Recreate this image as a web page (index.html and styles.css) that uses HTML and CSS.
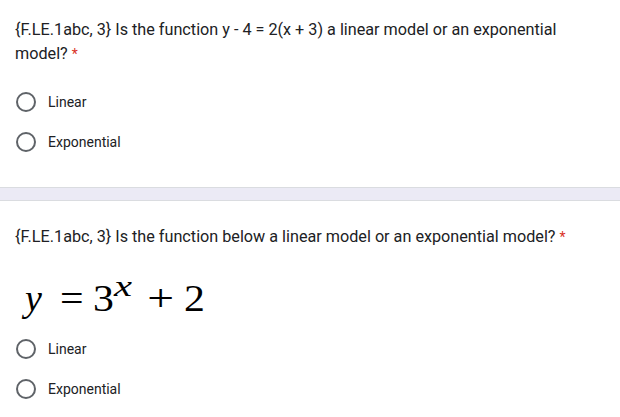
FILE: index.html
```html
<!DOCTYPE html>
<html>
<head>
<meta charset="utf-8">
<link rel="stylesheet" href="styles.css">
</head>
<body>
<section class="card first">
  <div class="question">{F.LE.1abc, 3} Is the function y - 4 = 2(x + 3) a linear model or an exponential model? <span class="req">*</span></div>
  <div class="options">
    <label class="option"><span class="radio"></span><span class="label">Linear</span></label>
    <label class="option"><span class="radio"></span><span class="label">Exponential</span></label>
  </div>
</section>
<div class="band"></div>
<section class="card second">
  <div class="question">{F.LE.1abc, 3} Is the function below a linear model or an exponential model? <span class="req">*</span></div>
  <div class="equation"><i class="var">y</i><span class="op eq">=</span><span class="num">3</span><sup><i>x</i></sup><span class="op plus">+</span><span class="num">2</span></div>
  <div class="options">
    <label class="option"><span class="radio"></span><span class="label">Linear</span></label>
    <label class="option"><span class="radio"></span><span class="label">Exponential</span></label>
  </div>
</section>
</body>
</html>
```
FILE: styles.css
```css
html, body {
  margin: 0;
  padding: 0;
  background: #ffffff;
}
body {
  width: 620px;
  height: 417px;
  overflow: hidden;
  font-family: Roboto, "Liberation Sans", sans-serif;
  color: #202124;
}
.card {
  padding: 0 15px;
}
.first {
  padding-top: 18px;
  height: 187px;
  box-sizing: border-box;
}
.question {
  font-size: 16.2px;
  line-height: 24px;
  width: 580px;
  letter-spacing: 0;
}
.req {
  color: #d93025;
  font-size: 14px;
}
.options {
  display: flex;
  flex-direction: column;
}
.first .options {
  margin-top: 16px;
}
.option {
  display: flex;
  align-items: center;
  height: 40px;
}
.radio {
  width: 16px;
  height: 16px;
  border: 2px solid #5f6368;
  border-radius: 50%;
  margin-left: 1px;
  flex: none;
}
.label {
  margin-left: 12px;
  font-size: 14px;
  color: #202124;
}
.band {
  height: 12px;
  background: #ebeaf5;
  border-top: 1px solid #dadce0;
  border-bottom: 1px solid #dadce0;
  box-sizing: content-box;
}
.second {
  padding-top: 24px;
}
.equation {
  font-family: "Liberation Serif", "DejaVu Serif", serif;
  font-size: 38px;
  line-height: 44px;
  margin-top: 27px;
  margin-left: 10px;
  color: #000;
  height: 53px;
}
.equation i {
  font-style: italic;
}
.op, .num {
  display: inline-block;
}
.num {
  transform: scaleX(1.1);
}
.eq {
  transform: scaleX(1.1);
  margin: 0 12px 0 19px;
}
.plus {
  transform: scaleX(1.25);
  margin: 0 14px 0 22px;
}
.equation sup {
  display: inline-block;
  font-size: 30px;
  vertical-align: 15px;
  line-height: 0;
  margin-left: 1px;
  transform: scaleX(1.35);
  transform-origin: left center;
}
```
